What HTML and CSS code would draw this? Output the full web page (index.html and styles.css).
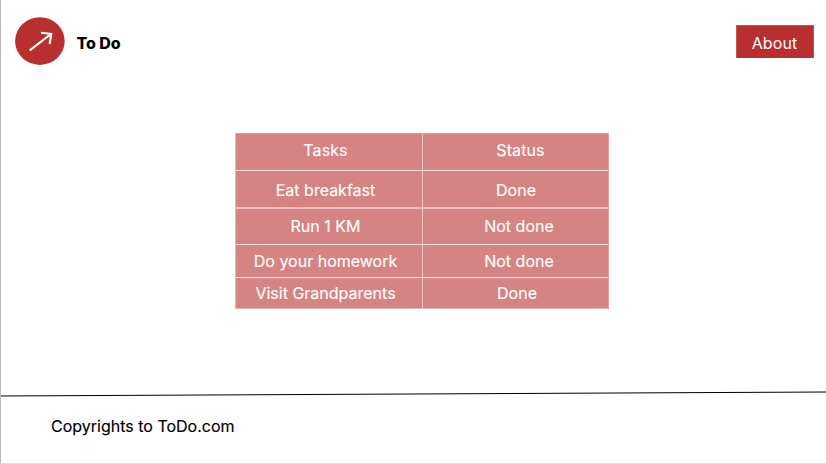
FILE: index.html
```html
<!DOCTYPE html>
<html lang="en">
<head>
<meta charset="utf-8">
<title>To Do</title>
<link rel="stylesheet" href="styles.css">
</head>
<body>
<div class="page">
  <header class="header">
    <svg class="logo" width="50" height="48" viewBox="0 0 50 48">
      <ellipse cx="24.9" cy="24.1" rx="24.8" ry="23.8" fill="#b82f2f"/>
      <path d="M14.8 33.4L36 17M26 15.8L36.3 17L34.6 27" fill="none" stroke="#fff" stroke-width="2.1"/>
    </svg>
    <h1 class="brand">To Do</h1>
    <a class="about">About</a>
  </header>
  <main class="main">
    <div class="table">
      <div class="row head"><div class="cell">Tasks</div><div class="cell status">Status</div></div>
      <div class="row eat"><div class="cell">Eat breakfast</div><div class="cell done">Done</div></div>
      <div class="row run"><div class="cell">Run 1 KM</div><div class="cell">Not done</div></div>
      <div class="row work"><div class="cell">Do your homework</div><div class="cell">Not done</div></div>
      <div class="row visit"><div class="cell">Visit Grandparents</div><div class="cell done">Done</div></div>
    </div>
  </main>
  <footer class="footer">
    <svg class="rule" width="826" height="6" viewBox="0 0 826 6"><path d="M-1 5L826 1" stroke="#000" stroke-width="1"/></svg>
    <p class="copy">Copyrights to ToDo.com</p>
  </footer>
</div>
</body>
</html>
```
FILE: styles.css
```css
* { box-sizing: border-box; }
body { margin: 0; background: #fff; font-family: Inter, sans-serif; font-size: 16px; line-height: 20px; }
.page { height: 464px; display: flex; flex-direction: column; border-left: 1px solid #b8b8b8; border-bottom: 1px solid #dedede; overflow: hidden; }
.header { height: 133px; flex: none; display: flex; align-items: flex-start; padding: 17px 12px 0 14px; }
.logo { flex: none; }
.brand { margin: 16px 0 0 11.5px; font-size: 16px; line-height: 20px; font-weight: 800; letter-spacing: -.1px; white-space: nowrap; }
.about { margin: 8px 0 0 auto; width: 78px; height: 33px; padding: 7px 1px 0 0; text-align: center; color: #fff; background: #b82f2f; border: 1px solid #c65252; border-width: 1px 1px 0; letter-spacing: .1px; }
.main { height: 258px; flex: none; padding-left: 234px; }
.table { width: 374px; color: #fff; background: #d58383; border: 1px solid #dda0a0; border-left-color: #e6b8b8; border-bottom-color: #e6b8b8; -webkit-text-stroke: .15px #fff; }
.row { display: grid; grid-template-columns: 187px 185px; border-bottom: 1px solid #f6e3e3; }
.cell { display: flex; align-items: center; justify-content: center; white-space: nowrap; }
.cell:first-child { border-right: 1px solid #ecc9c9; padding-right: 7px; }
.cell:last-child { padding-left: 7px; }
.head { height: 37px; letter-spacing: .1px; }
.eat { height: 38px; border-bottom: 2px solid #e8bcbc; }
.run { height: 36px; }
.work { height: 33px; }
.visit { height: 30px; border-bottom: 0; }
.head .cell { padding-bottom: 4px; }
.eat .cell { padding-top: 2px; }
.run .cell { padding-bottom: 2px; }
.row .status { padding-left: 10px; }
.row .done { padding-left: 1px; }
.visit .done { padding-left: 3px; }
.footer { flex: 1; }
.rule { display: block; margin-left: -1px; }
.copy { margin: 19px 0 0 50px; color: #000; -webkit-text-stroke: .15px #000; }
```
